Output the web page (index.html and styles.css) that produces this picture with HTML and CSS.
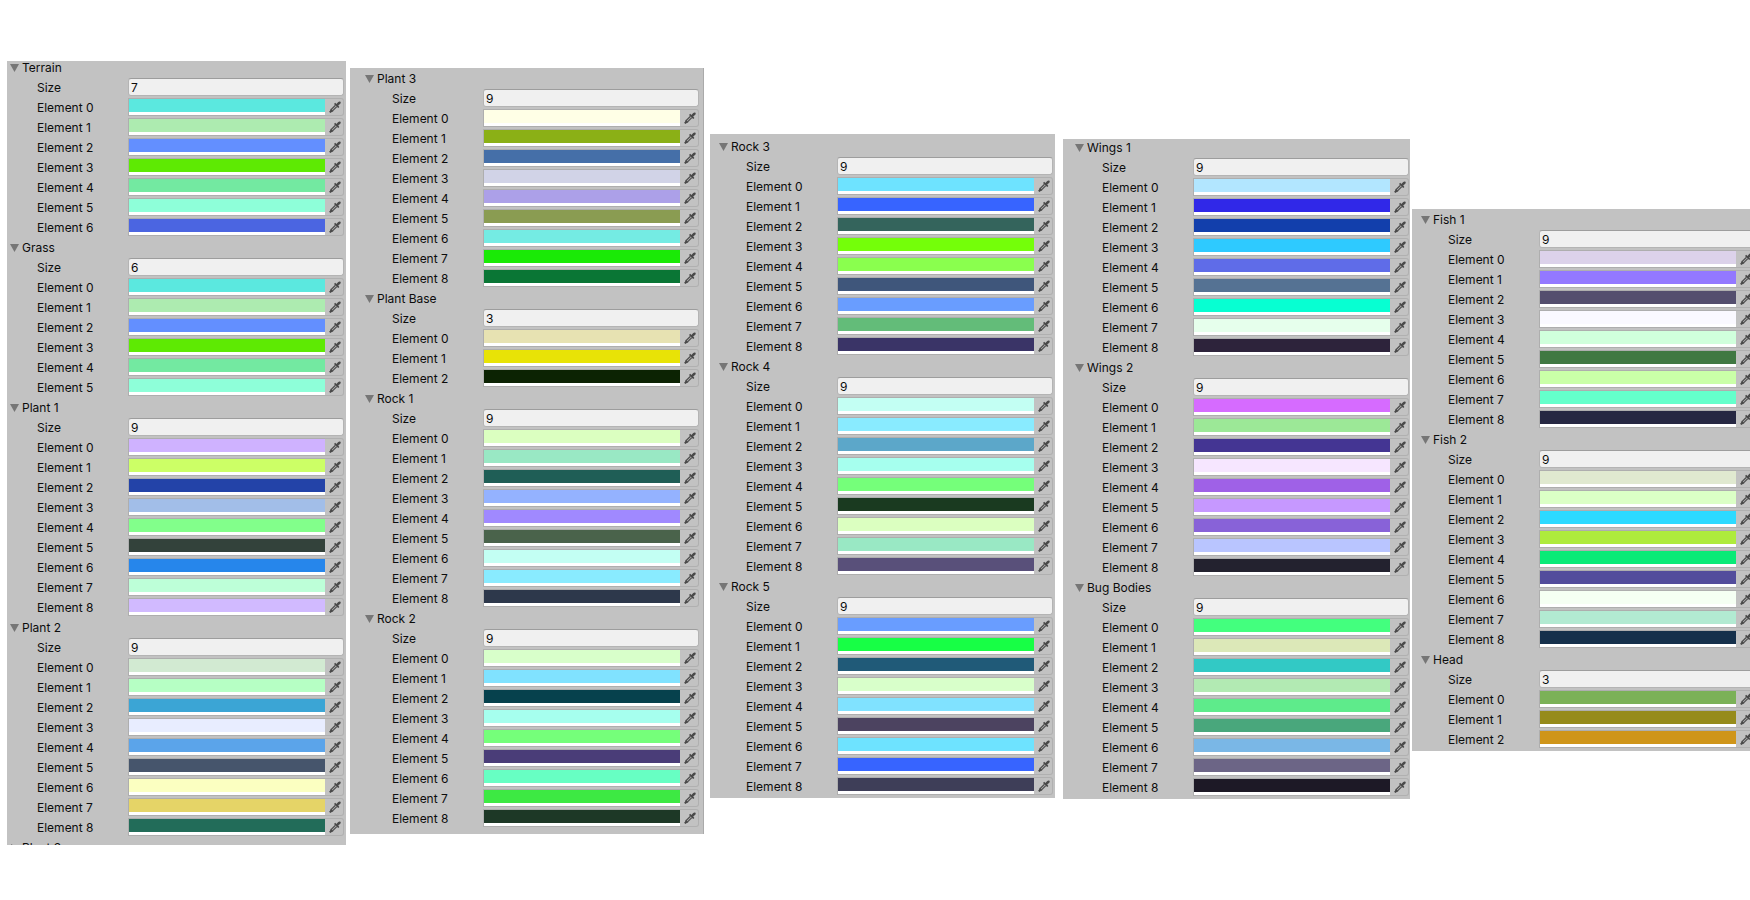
FILE: index.html
```html
<!DOCTYPE html>
<html lang="en">
<head>
<meta charset="utf-8">
<title>Palettes</title>
<link rel="stylesheet" href="styles.css">
</head>
<body>
<svg class="sprite" aria-hidden="true">
  <symbol id="dropper" viewBox="0 0 12 12">
    <path d="M7.4 3 9 1.2C9.7.4 10.8.2 11.4.7 12 1.3 11.8 2.3 11 3L9.2 4.6 10.4 5.9 9.2 7.1 5 2.9 6.2 1.7Z" fill="#4a4a4a"/>
    <path d="M6.5 4.3 2.4 8.4 1.9 10.2 3.7 9.7 7.8 5.6" fill="none" stroke="#505050" stroke-width="1.3"/>
    <path d="M1.8 7.8 4.3 10.3 2.8 10.9 1.4 12 .1 10.7 1.2 9.4Z" fill="#4a4a4a"/>
  </symbol>
  <symbol id="opened" viewBox="0 0 9 8"><path d="M0 0H9L4.5 8Z" fill="#767676"/></symbol>
  <symbol id="closed" viewBox="0 0 9 8"><path d="M1 0 8 4 1 8Z" fill="#767676"/></symbol>
</svg>
<main class="board" id="board"></main>
<script src="palettes.js"></script>
</body>
</html>
```
FILE: styles.css
```css
* { box-sizing: border-box; }
body {
  margin: 0;
  background: #fff;
  color: #0c0c0c;
  font: 12px/20px Inter, "Liberation Sans", sans-serif;
  overflow-x: hidden;
}
.sprite { display: none; }
.board {
  display: grid;
  grid-template-columns: 339fr 358fr 351fr 355fr 346fr;
  align-items: start;
  width: calc(100% + 6px);
  padding-left: 7px;
}
.panel {
  background: #c2c2c2;
  overflow: hidden;
}
.panel-1 { margin-top: 61px; padding: 0 2px 0 3px; }
.panel-2 { margin: 68px 0 0 4px; padding: 1px 4px 5px 15px; border-right: 1px solid #aaa; }
.panel-3 { margin: 134px 0 0 6px; padding: 3px 2px 1px 9px; }
.panel-4 { margin: 139px 0 0 8px; padding: 0 1px 1px 12px; }
.panel-5 { margin: 209px 0 0 2px; padding: 1px 1px 1px 9px; }
.panel-1 .group:first-child { margin-top: -3px; }
.panel-4 .group:first-child { margin-top: -1px; }
.group-cut { height: 7px; overflow: hidden; }
.fold {
  display: flex;
  align-items: center;
  gap: 3px;
  width: 100%;
  height: 20px;
  padding: 0;
  border: 0;
  background: none;
  color: inherit;
  font: inherit;
  text-align: left;
}
.fold svg { width: 9px; height: 8px; }
.row {
  display: grid;
  grid-template-columns: 91px 1fr;
  height: 20px;
  padding-left: 27px;
}
.field {
  display: flex;
  height: 18px;
}
.size {
  width: 100%;
  height: 18px;
  padding: 1px 2px 0;
  border: 1px solid #b4b4b4;
  border-top-color: #9d9d9d;
  border-radius: 3px;
  background: #f0f0f0;
  color: inherit;
  font: inherit;
  line-height: 15px;
}
.swatch {
  appearance: none;
  flex: 1;
  min-width: 0;
  height: 18px;
  padding: 0 0 3px;
  border: 1px solid #aeaeae;
  border-right: 0;
  background: #fff;
}
.swatch::-webkit-color-swatch-wrapper { padding: 0; }
.swatch::-webkit-color-swatch { border: 0; border-radius: 0; }
.pick {
  display: flex;
  align-items: center;
  justify-content: center;
  width: 19px;
  height: 18px;
  padding: 0 0 0 2px;
  border: 1px solid #b0b0b0;
  border-left: 0;
  border-radius: 0 3px 3px 0;
  background: #c2c2c2;
}
.pick svg { width: 12px; height: 12px; }
```
FILE: palettes.js
```js
const panels = [
  [
    ["Terrain", "5be8df adebb0 638fff 5eea03 73e9a1 8effd9 4b65e1"],
    ["Grass", "5be8df adebb0 638fff 5eea03 73e9a1 8effd9"],
    ["Plant 1", "cfb2ff ccff66 2343a8 a2bee8 82ff8b 33423b 2686eb bdffd8 d1baff"],
    ["Plant 2", "d2ead2 b6ffc4 3ba5d5 e8edff 5ba4ea 46556c fbffc1 e5d467 226c59"],
    ["Plant 3", null]
  ],
  [
    ["Plant 3", "ffffe6 8bb016 456fa8 d1d3e7 aca0e8 8a9c52 74ebe3 1aea06 0a7635"],
    ["Plant Base", "e7e2b2 e8e306 0c2303"],
    ["Rock 1", "dbffc0 99e8c4 1f5e56 94b2ff a089ff 4a634b c3fff3 89ebff 2d384b"],
    ["Rock 2", "d8ffca 80e2ff 06414d a6ffee 75ff7a 4a3d78 67ffc3 3de943 1d3826"]
  ],
  [
    ["Rock 3", "6ee3ff 3764ff 34645c 74ff09 8aff4e 3f567b 699dff 63bc79 3a3467"],
    ["Rock 4", "c3fff3 89ebff 5ca7c9 a6ffee 75ff7a 1a3a20 dbffc0 99e8c4 59507a"],
    ["Rock 5", "699dff 17ff45 205a78 d8ffca 80e2ff 4c4360 6ee3ff 3764ff 3e3e58"]
  ],
  [
    ["Wings 1", "b2e6ff 3028e8 123fac 2ecaff 5f6ce8 557293 07ffd2 e6ffec 2d233b"],
    ["Wings 2", "d66bff 9ce897 443593 f6e6ff 9f61e7 c698ff 8862d8 b9c5ff 23222f"],
    ["Bug Bodies", "43ff7e dce8b8 32c9c5 b2eab3 5eeb8b 49a77c 7ab7e6 6c6586 1d1926"]
  ],
  [
    ["Fish 1", "dcd2ea 9378ff 544e6e faf9ff d0ffdc 407842 caffa8 64ffcb 262742"],
    ["Fish 2", "e0e9d0 dbffc6 2ddaff aeeb3c 09ea77 534d9c f5fff3 b2ead2 15304b"],
    ["Head", "7bb157 968b1b cf951a"]
  ]
];

const icon = name => `<svg aria-hidden="true"><use href="#${name}"/></svg>`;

function group([title, list], id) {
  if (!list) {
    return `<section class="group group-cut"><button class="fold" aria-expanded="false">${icon("closed")}${title}</button></section>`;
  }
  const colors = list.split(" ");
  const rows = colors.map((c, i) => `
    <div class="row">
      <label for="${id}-${i}">Element ${i}</label>
      <div class="field"><input class="swatch" type="color" id="${id}-${i}" value="#${c}"><button class="pick" aria-label="Pick color">${icon("dropper")}</button></div>
    </div>`).join("");
  return `<section class="group">
    <button class="fold" aria-expanded="true">${icon("opened")}${title}</button>
    <div class="row"><label for="${id}-size">Size</label><input class="size" type="text" id="${id}-size" value="${colors.length}"></div>${rows}
  </section>`;
}

document.getElementById("board").innerHTML = panels.map((groups, p) =>
  `<div class="panel panel-${p + 1}">${groups.map((g, i) => group(g, `g${p}-${i}`)).join("")}</div>`
).join("");
```
